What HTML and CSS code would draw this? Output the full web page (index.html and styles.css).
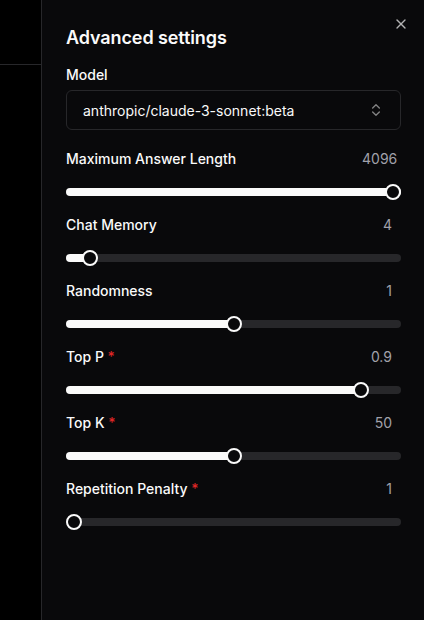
FILE: index.html
```html
<!DOCTYPE html>
<html lang="en">
<head>
  <meta charset="UTF-8" />
  <title>Advanced settings</title>
  <link rel="stylesheet" href="styles.css">
</head>
<body>
  <div class="screen">
    <div class="backdrop">
      <div class="backdrop-header"></div>
    </div>

    <aside class="sheet">
      <button class="close-btn" aria-label="Close">
        <svg width="16" height="16" viewBox="0 0 24 24" fill="none" stroke="currentColor" stroke-width="2" stroke-linecap="round" stroke-linejoin="round"><path d="M18 6 6 18"/><path d="m6 6 12 12"/></svg>
      </button>

      <h2 class="sheet-title">Advanced settings</h2>

      <div class="field">
        <label class="field-label">Model</label>
        <div class="select">
          <span>anthropic/claude-3-sonnet:beta</span>
          <svg class="select-icon" width="16" height="16" viewBox="0 0 24 24" fill="none" stroke="currentColor" stroke-width="2" stroke-linecap="round" stroke-linejoin="round"><path d="m7 15 5 5 5-5"/><path d="m7 9 5-5 5 5"/></svg>
        </div>
      </div>

      <div id="settings"></div>
    </aside>
  </div>

  <script>
    const settings = [
      { name: "Maximum Answer Length", value: "4096", pos: 1 },
      { name: "Chat Memory", value: "4", pos: 0.05 },
      { name: "Randomness", value: "1", pos: 0.5 },
      { name: "Top P", value: "0.9", pos: 0.9, required: true },
      { name: "Top K", value: "50", pos: 0.5, required: true },
      { name: "Repetition Penalty", value: "1", pos: 0, required: true }
    ];

    const list = document.getElementById("settings");

    settings.forEach(s => {
      const div = document.createElement("div");
      div.className = "setting";
      div.innerHTML = `
        <div class="setting-head">
          <span class="setting-label">${s.name}${s.required ? ' <span class="req">*</span>' : ''}</span>
          <span class="setting-value">${s.value}</span>
        </div>
        <div class="slider">
          <div class="track"><div class="range" style="width:${s.pos * 100}%"></div></div>
          <div class="thumb" style="left:calc((100% - 16px) * ${s.pos})"></div>
        </div>
      `;
      list.appendChild(div);
    });
  </script>
</body>
</html>
```

FILE: styles.css
```css
body { margin: 0; background: #000; font-family: Inter, "Noto Sans", sans-serif; color: #fafafa; }
.screen { display: flex; width: 424px; height: 620px; overflow: hidden; }

.backdrop { width: 41px; background: #000; }
.backdrop-header { height: 64px; border-bottom: 1px solid #27272a; }

.sheet {
  flex: 1; position: relative; background: #09090b; border-left: 1px solid #27272a;
  padding: 24px 23px 24px 24px;
}
.close-btn {
  position: absolute; top: 16px; right: 15px; padding: 0; border: none; background: none;
  color: #fafafa; opacity: 0.7; width: 16px; height: 16px; cursor: pointer;
}
.close-btn svg { display: block; }

.sheet-title { margin: 0; font-size: 18px; line-height: 28px; font-weight: 600; letter-spacing: -0.1px; }

.field { margin-top: 13px; }
.field-label { display: block; font-size: 14px; line-height: 20px; font-weight: 500; }
.select {
  margin-top: 5px; height: 40px; box-sizing: border-box; border: 1px solid #27272a; border-radius: 6px;
  padding: 0 16px; display: flex; align-items: center; justify-content: space-between; font-size: 14px;
}
.select-icon { opacity: 0.5; margin-right: 0; }

#settings { margin-top: 19px; display: flex; flex-direction: column; gap: 15px; }
.setting-head { display: flex; justify-content: space-between; font-size: 14px; line-height: 20px; }
.setting-label { font-weight: 500; }
.req { color: #dc2626; }
.setting-value { width: 30px; margin-right: 9px; text-align: right; color: #a1a1aa; }

.slider { position: relative; margin-top: 15px; height: 16px; display: flex; align-items: center; }
.track { flex: 1; height: 8px; border-radius: 4px; background: #27272a; overflow: hidden; }
.range { height: 100%; background: #fafafa; }
.thumb {
  position: absolute; top: 0; width: 16px; height: 16px; box-sizing: border-box;
  border: 2px solid #fafafa; border-radius: 50%; background: #09090b;
}
```
